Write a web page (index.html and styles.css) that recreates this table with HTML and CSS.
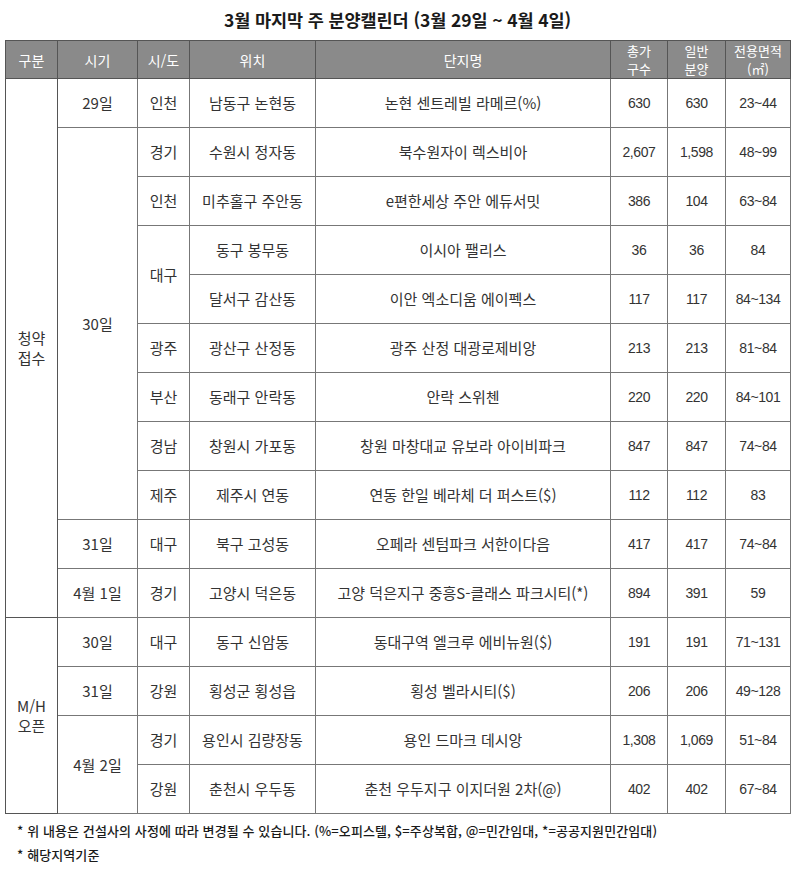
FILE: index.html
```html
<!DOCTYPE html>
<html lang="ko">
<head>
<meta charset="utf-8">
<link rel="stylesheet" href="styles.css">
</head>
<body>
<div class="page">
  <h1 class="title">3월 마지막 주 분양캘린더 (3월 29일 ~ 4월 4일)</h1>
  <table class="cal">
    <colgroup>
      <col class="c1"><col class="c2"><col class="c3"><col class="c4"><col class="c5"><col class="c6"><col class="c7"><col class="c8">
    </colgroup>
    <thead>
      <tr>
        <th>구분</th><th>시기</th><th>시/도</th><th>위치</th><th>단지명</th><th class="two">총가<br>구수</th><th class="two">일반<br>분양</th><th class="two">전용면적<br>(㎡)</th>
      </tr>
    </thead>
    <tbody>
      <tr><td rowspan="11" class="grp">청약<br>접수</td><td>29일</td><td>인천</td><td>남동구 논현동</td><td>논현 센트레빌 라메르(%)</td><td class="n">630</td><td class="n">630</td><td class="n">23~44</td></tr>
      <tr><td rowspan="8">30일</td><td>경기</td><td>수원시 정자동</td><td>북수원자이 렉스비아</td><td class="n">2,607</td><td class="n">1,598</td><td class="n">48~99</td></tr>
      <tr><td>인천</td><td>미추홀구 주안동</td><td>e편한세상 주안 에듀서밋</td><td class="n">386</td><td class="n">104</td><td class="n">63~84</td></tr>
      <tr><td rowspan="2">대구</td><td>동구 봉무동</td><td>이시아 팰리스</td><td class="n">36</td><td class="n">36</td><td class="n">84</td></tr>
      <tr><td>달서구 감산동</td><td>이안 엑소디움 에이펙스</td><td class="n">117</td><td class="n">117</td><td class="n">84~134</td></tr>
      <tr><td>광주</td><td>광산구 산정동</td><td>광주 산정 대광로제비앙</td><td class="n">213</td><td class="n">213</td><td class="n">81~84</td></tr>
      <tr><td>부산</td><td>동래구 안락동</td><td>안락 스위첸</td><td class="n">220</td><td class="n">220</td><td class="n">84~101</td></tr>
      <tr><td>경남</td><td>창원시 가포동</td><td>창원 마창대교 유보라 아이비파크</td><td class="n">847</td><td class="n">847</td><td class="n">74~84</td></tr>
      <tr><td>제주</td><td>제주시 연동</td><td>연동 한일 베라체 더 퍼스트($)</td><td class="n">112</td><td class="n">112</td><td class="n">83</td></tr>
      <tr><td>31일</td><td>대구</td><td>북구 고성동</td><td>오페라 센텀파크 서한이다음</td><td class="n">417</td><td class="n">417</td><td class="n">74~84</td></tr>
      <tr><td>4월 1일</td><td>경기</td><td>고양시 덕은동</td><td>고양 덕은지구 중흥S-클래스 파크시티(*)</td><td class="n">894</td><td class="n">391</td><td class="n">59</td></tr>
      <tr><td rowspan="4" class="grp">M/H<br>오픈</td><td>30일</td><td>대구</td><td>동구 신암동</td><td>동대구역 엘크루 에비뉴원($)</td><td class="n">191</td><td class="n">191</td><td class="n">71~131</td></tr>
      <tr><td>31일</td><td>강원</td><td>횡성군 횡성읍</td><td>횡성 벨라시티($)</td><td class="n">206</td><td class="n">206</td><td class="n">49~128</td></tr>
      <tr><td rowspan="2">4월 2일</td><td>경기</td><td>용인시 김량장동</td><td>용인 드마크 데시앙</td><td class="n">1,308</td><td class="n">1,069</td><td class="n">51~84</td></tr>
      <tr><td>강원</td><td>춘천시 우두동</td><td>춘천 우두지구 이지더원 2차(@)</td><td class="n">402</td><td class="n">402</td><td class="n">67~84</td></tr>
    </tbody>
  </table>
  <p class="note first">* 위 내용은 건설사의 사정에 따라 변경될 수 있습니다. (%=오피스텔, $=주상복합, @=민간임대, *=공공지원민간임대)</p>
  <p class="note">* 해당지역기준</p>
</div>
</body>
</html>
```

FILE: styles.css
```css
html, body {
  margin: 0;
  padding: 0;
  background: #ffffff;
}
body {
  font-family: "Noto Sans CJK KR", "Noto Sans", sans-serif;
  color: #333333;
}
.page {
  width: 785px;
  padding: 0 0 0 5px;
}
.title {
  margin: 0;
  height: 40px;
  line-height: 40px;
  font-size: 17.5px;
  font-weight: 700;
  text-align: center;
  color: #1a1a1a;
  letter-spacing: -0.1px;
}
.cal {
  width: 785px;
  border-collapse: collapse;
  table-layout: fixed;
  border: 1px solid #555555;
}
.c1 { width: 52px; }
.c2 { width: 80px; }
.c3 { width: 52px; }
.c4 { width: 126px; }
.c5 { width: 295px; }
.c6 { width: 57px; }
.c7 { width: 58px; }
.c8 { width: 65px; }
.cal th {
  height: 37px;
  padding: 0;
  background: #8a8a8a;
  color: #ffffff;
  font-weight: 400;
  font-size: 14px;
  line-height: 18px;
  border: 1px solid #555555;
  text-align: center;
}
.cal th.two {
  font-size: 13px;
  line-height: 18px;
}
.cal td {
  height: 48px;
  padding: 0;
  border: 1px solid #777777;
  text-align: center;
  font-size: 15px;
  line-height: 20px;
  white-space: nowrap;
}
.cal td.grp {
  border-color: #555555;
}
.cal td.n {
  font-family: "Liberation Sans Narrow", "Liberation Sans", sans-serif;
  font-size: 14px;
  letter-spacing: -0.4px;
}
.note {
  margin: 0;
  padding-left: 12px;
  font-size: 13px;
  font-weight: 500;
  color: #1a1a1a;
  height: 24px;
  line-height: 24px;
  letter-spacing: 0.1px;
}
.note.first {
  margin-top: 5px;
}
```
